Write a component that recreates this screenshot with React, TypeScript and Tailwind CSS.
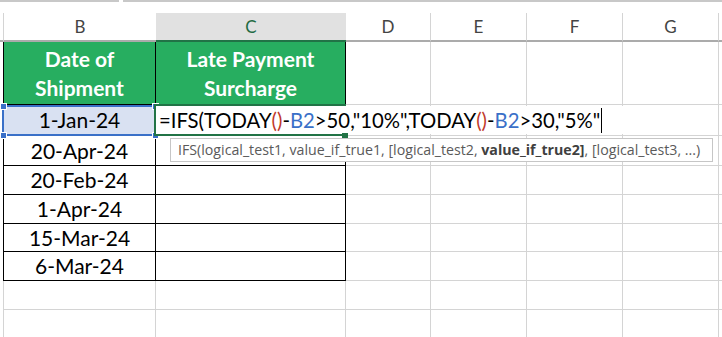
const GRID = 'border-[#d4d4d4]'

const DATES = ['1-Jan-24', '20-Apr-24', '20-Feb-24', '1-Apr-24', '15-Mar-24', '6-Mar-24']

function GridTail() {
  return (
    <>
      <div className={`w-[85px] shrink-0 border-r border-b ${GRID}`} />
      <div className={`w-[96px] shrink-0 border-r border-b ${GRID}`} />
      <div className={`w-[96px] shrink-0 border-r border-b ${GRID}`} />
      <div className={`w-[96px] shrink-0 border-r border-b ${GRID}`} />
      <div className={`flex-1 border-b ${GRID}`} />
    </>
  )
}

function DataRow({ h, date, active }: { h: string; date: string; active?: boolean }) {
  return (
    <div className={`flex ${h}`}>
      <div className="w-[4px] shrink-0 border-r border-black" />
      <div
        className={`flex w-[152px] shrink-0 items-center justify-center border-r border-b border-black text-[21px] text-black ${
          active ? 'bg-[#d9e1f2]' : ''
        }`}
      >
        {date}
      </div>
      <div className="w-[190px] shrink-0 border-r border-b border-black" />
      <GridTail />
    </div>
  )
}

function EmptyRow({ h }: { h: string }) {
  return (
    <div className={`flex ${h}`}>
      <div className={`w-[4px] shrink-0 border-r ${GRID}`} />
      <div className={`w-[152px] shrink-0 border-r border-b ${GRID}`} />
      <div className={`w-[190px] shrink-0 border-r border-b ${GRID}`} />
      <GridTail />
    </div>
  )
}

function Handle({ pos }: { pos: string }) {
  return <div className={`absolute h-[7px] w-[7px] border border-white bg-[#3a70c8] ${pos}`} />
}

export default function App() {
  // 행 높이는 스크린샷 기준 (엑셀 확대 145% 정도)
  const heights = ['h-[31px]', 'h-[30px]', 'h-[29px]', 'h-[29px]', 'h-[28px]', 'h-[29px]']

  return (
    <div className="relative h-[337px] w-[722px] overflow-hidden bg-white font-['Lato',sans-serif]">
      {/* 수식 입력줄 아래 경계 */}
      <div className="flex h-[2px]">
        <div className="w-[119px] bg-[#c8c8c8]" />
        <div className="w-[4px]" />
        <div className="flex-1 bg-[#c8c8c8]" />
      </div>
      <div className="h-[11px]" />

      {/* 열 머리글 */}
      <div className="flex h-[29px] text-[17px] text-[#444]">
        <div className={`w-[4px] shrink-0 border-r border-b-2 ${GRID} border-b-[#ababab]`} />
        <div className="flex w-[152px] shrink-0 items-center justify-center border-b-2 border-[#ababab]">B</div>
        <div className="flex w-[190px] shrink-0 items-center justify-center border-b-2 border-[#217346] bg-[#e1e1e1] text-[#1f6b43]">
          C
        </div>
        <div className={`flex w-[85px] shrink-0 items-center justify-center border-r border-b-2 ${GRID} border-b-[#ababab]`}>D</div>
        <div className={`flex w-[96px] shrink-0 items-center justify-center border-r border-b-2 ${GRID} border-b-[#ababab]`}>E</div>
        <div className={`flex w-[96px] shrink-0 items-center justify-center border-r border-b-2 ${GRID} border-b-[#ababab]`}>F</div>
        <div className={`flex w-[96px] shrink-0 items-center justify-center border-r border-b-2 ${GRID} border-b-[#ababab]`}>G</div>
        <div className="flex-1 border-b-2 border-[#ababab]" />
      </div>

      {/* 표 머리글 */}
      <div className="flex h-[63px] text-[21px] font-bold leading-[29px] text-white">
        <div className="w-[4px] shrink-0 border-r border-black" />
        <div className="flex w-[152px] shrink-0 flex-col items-center justify-center border-r border-b border-black bg-[#27ae60]">
          <span>Date of</span>
          <span>Shipment</span>
        </div>
        <div className="flex w-[190px] shrink-0 flex-col items-center justify-center border-r border-b border-black bg-[#27ae60]">
          <span>Late Payment</span>
          <span>Surcharge</span>
        </div>
        <GridTail />
      </div>

      {DATES.map((d, i) => (
        <DataRow key={d} h={heights[i]} date={d} active={i === 0} />
      ))}
      <EmptyRow h="h-[29px]" />
      <EmptyRow h="h-[29px]" />

      {/* B2 참조 테두리 */}
      <div className="absolute left-[2px] top-[105px] h-[31px] w-[154px] border-2 border-[#3a70c8]" />
      <Handle pos="left-0 top-[103px]" />
      <Handle pos="left-[152px] top-[103px]" />
      <Handle pos="left-0 top-[132px]" />
      <Handle pos="left-[152px] top-[132px]" />

      {/* C2 편집 중 */}
      <div className="absolute left-[156px] top-[106px] flex h-[28px] w-[520px] items-center bg-white pl-[3px] text-[20.3px] text-black">
        <span>=IFS(TODAY</span>
        <span className="text-[#c0392b]">()</span>
        <span>-</span>
        <span className="text-[#3a70c8]">B2</span>
        <span>&gt;50,"10%",TODAY</span>
        <span className="text-[#c0392b]">()</span>
        <span>-</span>
        <span className="text-[#3a70c8]">B2</span>
        <span>&gt;30,"5%"</span>
      </div>
      <div className="absolute left-[155px] top-[104px] h-[2px] w-[191px] bg-[#217346]" />
      <div className="absolute left-[154px] top-[104px] h-[32px] w-[2px] bg-[#217346]" />
      <div className="absolute left-[155px] top-[134px] h-[2px] w-[187px] bg-[#217346]" />
      <div className="absolute left-[342px] top-[133px] h-[5px] w-[6px] bg-[#217346]" />
      <div className="absolute left-[601px] top-[108px] h-[25px] w-px bg-black" />

      {/* 함수 도움말 */}
      <div className="absolute left-[170px] top-[138px] flex h-[24px] w-[543px] items-center whitespace-nowrap border border-[#c6c6c6] bg-white pl-[7px] font-['Open_Sans',sans-serif] text-[14.2px] text-[#5a5a5a]">
        IFS(logical_test1, value_if_true1, [logical_test2,&nbsp;
        <span className="font-bold text-[#404040]">value_if_true2]</span>, [logical_test3, ...)
      </div>
    </div>
  )
}
